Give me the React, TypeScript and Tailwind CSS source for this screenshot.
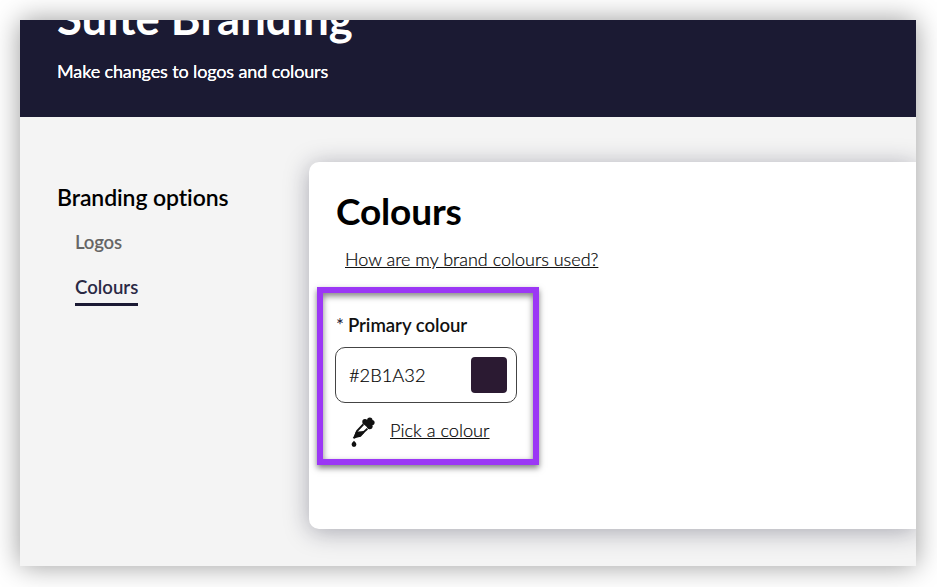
const options = [
  { label: "Logos", active: false },
  { label: "Colours", active: true },
];

function DropperIcon() {
  return (
    <svg width="24" height="31" viewBox="0 0 24 30" preserveAspectRatio="none" aria-hidden="true">
      {/* Glass */}
      <path d="M12.4 7 L6 13.6 L4 19 L8.6 18 L16.4 11.4" fill="#fff" stroke="#111" strokeWidth="1.8" />
      {/* Ink left in the tip */}
      <path d="M4.8 14.2 L13 13.6 L13.4 15.2 L9.8 19 L5.2 20 L3.4 21 L1.8 20.4 L3 18.4 Z" fill="#111" />
      {/* Rubber bulb and collar */}
      <circle cx="18.8" cy="3.2" r="2.7" fill="#111" />
      <circle cx="21" cy="5.4" r="2.6" fill="#111" />
      <circle cx="14" cy="4.6" r="2.7" fill="#111" />
      <circle cx="18.8" cy="9" r="2.8" fill="#111" />
      <path d="M14 2.8 L20 3 L20.8 9.6 L18.4 11.8 L11.8 6.2 Z" fill="#111" />
      {/* Drop */}
      <path d="M3 23 C4.2 24.2 5.4 25.2 5.4 26.6 A2.4 2.4 0 0 1 .6 26.6 C.6 25.2 1.8 24.2 3 23 Z" fill="#111" />
    </svg>
  );
}

function Sidebar() {
  return (
    <nav className="w-[289px] shrink-0 pl-[37px] pt-[65px]">
      <h2 className="text-[23px] leading-[30px] font-semibold tracking-[-0.1px] text-black [font-variant-ligatures:none]">
        Branding options
      </h2>
      <ul className="flex flex-col items-start gap-[18px] pl-[18px] pt-[17px]">
        {options.map((option) => (
          <li
            key={option.label}
            className={
              option.active
                ? "border-b-3 border-[#1b1a33] pb-[2px] text-[18.6px] leading-[27px] font-semibold text-[#2a2944]"
                : "text-[18.6px] leading-[27px] font-semibold tracking-[-0.2px] text-[#666]"
            }
          >
            {option.label}
          </li>
        ))}
      </ul>
    </nav>
  );
}

function ColourField() {
  return (
    <div className="-ml-[19px] h-[178px] w-[222px] border-[6px] border-[#9b37f5] pl-3 pt-[22px] shadow-[0_3px_6px_rgba(0,0,0,0.5),inset_0_3px_6px_rgba(0,0,0,0.5)]">
      <label className="flex gap-1 pl-px text-[18.6px] leading-[20px] font-semibold text-[#111]">
        <span className="font-normal text-[#1b1a33]">*</span>
        <span className="tracking-[-0.05px]">Primary colour</span>
      </label>
      <div className="mt-3 flex h-14 w-[182px] items-center justify-between rounded-[10px] border border-[#444] bg-white pl-[13px] pr-[9px]">
        <span className="pt-0.5 text-[18.3px] font-light text-black [-webkit-text-stroke:0.2px_#111]">#2B1A32</span>
        <span className="size-9 rounded-[4px] bg-[#2b1a32]" />
      </div>
      <div className="flex items-start gap-[15px] pl-4 pt-[14px]">
        <DropperIcon />
        <a href="#" className="text-[18.2px] leading-[26px] font-light text-black underline [-webkit-text-stroke:0.2px_#111]">
          Pick a colour
        </a>
      </div>
    </div>
  );
}

export default function App() {
  return (
    <div className="h-[587px] w-[937px] overflow-hidden bg-white p-5 font-['Lato',sans-serif]">
      <div className="flex h-[546px] w-[896px] flex-col shadow-[0_0_26px_rgba(0,0,0,0.4)]">
        <header className="h-[97px] shrink-0 overflow-hidden bg-[#1b1a33] pl-[37px] text-white">
          <h1 className="-mt-[32px] text-[45.5px] leading-[60px] font-bold">Suite Branding</h1>
          <p className="mt-[10px] text-[18px] leading-[26px] tracking-[-0.13px] [text-shadow:0_0_0.5px_#fff]">
            Make changes to logos and colours
          </p>
        </header>
        <div className="flex flex-1 overflow-hidden bg-[#f4f4f4]">
          <Sidebar />
          <main className="mt-[45px] h-[367px] flex-1 rounded-l-[10px] bg-white pl-[27px] pt-[25px] shadow-[0_3px_24px_rgba(27,26,51,0.35)]">
            <h2 className="text-[37px] leading-[48px] font-bold tracking-[-0.15px] text-black">Colours</h2>
            <a href="#" className="ml-[9px] mt-[11px] block w-fit text-[18px] leading-[26px] font-light text-black underline [-webkit-text-stroke:0.2px_#111]">
              How are my brand colours used?
            </a>
            <div className="mt-[15px]">
              <ColourField />
            </div>
          </main>
        </div>
      </div>
    </div>
  );
}
